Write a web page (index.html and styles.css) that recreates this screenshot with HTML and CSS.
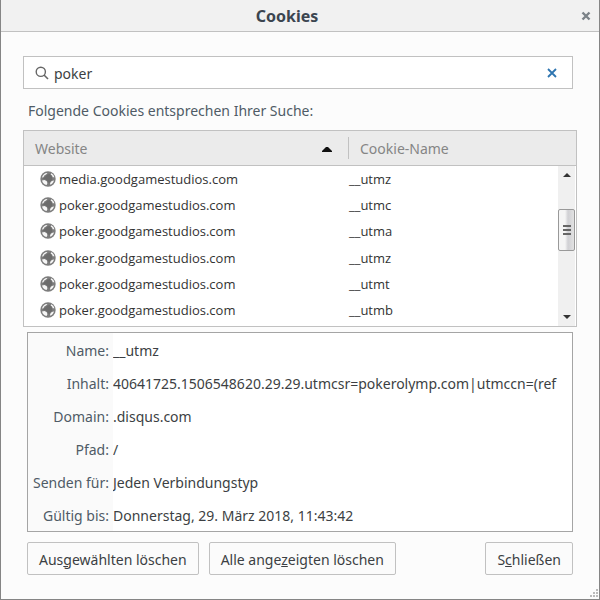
FILE: index.html
```html
<!DOCTYPE html>
<html lang="de">
<head>
<meta charset="utf-8">
<title>Cookies</title>
<link rel="stylesheet" href="styles.css">
</head>
<body>
<svg class="defs" aria-hidden="true">
  <symbol id="globe" viewBox="0 0 16 16">
    <circle cx="8" cy="8" r="7.700" fill="#7d7d7d"/>
    <path d="M2 6.500C2.500 4.500 4 2.700 6 2L7.500 2.300 6 3.600 4.300 4.600 3.400 6.200zM11.300 2.300C12.800 3 14 4.400 14.400 6.200L12.800 6.300 12 4.600 10.600 3.600zM2 9.400L4.600 9 6.800 10.200 7.400 12.200 6.600 14C4.300 13.600 2.500 11.800 2 9.400zM10 12.800L10.800 10.800 12.600 9.800 14 9.600C13.500 11.400 12.400 12.900 10.400 13.700z" fill="#f6f6f6"/>
    <path d="M2.600 7.800L5.400 5.400 7.400 3.400 9.800 3 11.600 5 12.400 8.600 10.400 10.600 9.200 12.600 7.400 10 5.600 8.600z" fill="#6c6c6c"/>
  </symbol>
</svg>
<div class="dialog" role="dialog" aria-labelledby="title">
  <header class="titlebar">
    <h1 id="title">Cookies</h1>
    <button class="close" type="button" aria-label="Fenster schließen">
      <svg viewBox="0 0 10 10" width="10" height="10"><path d="M1.500 1.500l7 7M8.500 1.500l-7 7" stroke="#7b8288" stroke-width="2.400"/></svg>
    </button>
  </header>
  <main class="content">
    <div class="search">
      <svg viewBox="0 0 14 14" width="14" height="14" aria-hidden="true"><circle cx="5.800" cy="5.800" r="4.600" fill="none" stroke="#666" stroke-width="1.400"/><path d="M9 9l4 4" stroke="#666" stroke-width="1.600"/></svg>
      <input type="text" value="poker" aria-label="Suchen">
      <button class="clear" type="button" aria-label="Suche löschen">
        <svg viewBox="0 0 10 10" width="10" height="10"><path d="M1 1l8 8M9 1l-8 8" stroke="#2e75b0" stroke-width="1.800"/></svg>
      </button>
    </div>
    <p class="intro">Folgende Cookies entsprechen Ihrer Suche:</p>
    <div class="list">
      <table>
        <thead>
          <tr>
            <th scope="col" aria-sort="ascending"><span class="head">Website<svg viewBox="0 0 10 6" width="10" height="6" aria-hidden="true"><path d="M0 6V5l4-4h2l4 4v1z" fill="#111"/></svg></span></th>
            <th scope="col">Cookie-Name</th>
          </tr>
        </thead>
        <tbody>
          <tr><td><span class="site"><svg class="globe"><use href="#globe"/></svg>media.goodgamestudios.com</span></td><td>__utmz</td></tr>
          <tr><td><span class="site"><svg class="globe"><use href="#globe"/></svg>poker.goodgamestudios.com</span></td><td>__utmc</td></tr>
          <tr><td><span class="site"><svg class="globe"><use href="#globe"/></svg>poker.goodgamestudios.com</span></td><td>__utma</td></tr>
          <tr><td><span class="site"><svg class="globe"><use href="#globe"/></svg>poker.goodgamestudios.com</span></td><td>__utmz</td></tr>
          <tr><td><span class="site"><svg class="globe"><use href="#globe"/></svg>poker.goodgamestudios.com</span></td><td>__utmt</td></tr>
          <tr><td><span class="site"><svg class="globe"><use href="#globe"/></svg>poker.goodgamestudios.com</span></td><td>__utmb</td></tr>
        </tbody>
      </table>
      <div class="scrollbar" aria-hidden="true">
        <svg viewBox="0 0 8 4" width="8" height="4"><path d="M0 4l4-4 4 4z" fill="#333"/></svg>
        <div class="track"><div class="thumb"><i></i><i></i><i></i></div></div>
        <svg viewBox="0 0 8 4" width="8" height="4"><path d="M0 0l4 4 4-4z" fill="#333"/></svg>
      </div>
    </div>
    <dl class="details">
      <dt>Name:</dt><dd>__utmz</dd>
      <dt>Inhalt:</dt><dd>40641725.1506548620.29.29.utmcsr=pokerolymp.com|utmccn=(ref</dd>
      <dt>Domain:</dt><dd>.disqus.com</dd>
      <dt>Pfad:</dt><dd>/</dd>
      <dt>Senden für:</dt><dd>Jeden Verbindungstyp</dd>
      <dt>Gültig bis:</dt><dd>Donnerstag, 29. März 2018, 11:43:42</dd>
    </dl>
    <div class="actions">
      <button type="button">Aus<u>g</u>ewählten löschen</button>
      <button type="button">Alle ange<u>z</u>eigten löschen</button>
      <button class="done" type="button">S<u>c</u>hließen</button>
    </div>
  </main>
  <svg class="grip" viewBox="0 0 9 9" width="9" height="9" aria-hidden="true"><path d="M7 0h2v2h-2zM7 3h2v2h-2zM7 6h2v2h-2zM4 3h2v2h-2zM4 6h2v2h-2zM1 6h2v2h-2z" fill="#bbb"/></svg>
</div>
</body>
</html>
```
FILE: styles.css
```css
* {
  box-sizing: border-box;
}

body {
  margin: 0;
  font: 14px/20px "Noto Sans", "Open Sans", sans-serif;
  color: #3c3f43;
}

button,
input {
  font: inherit;
  color: inherit;
}

.defs {
  position: absolute;
  width: 0;
  height: 0;
}

.dialog {
  position: relative;
  min-height: 100vh;
  border: solid #858585;
  border-width: 0 1px 2px;
  background: #fcfcfc;
}

.titlebar {
  display: flex;
  align-items: center;
  height: 32px;
  padding-right: 8px;
  border-bottom: 1px solid #c1c1c1;
  background: #f1f1f1;
}

h1 {
  flex: 1;
  margin: 0;
  padding-right: 8px;
  text-align: center;
  font-size: 16px;
  line-height: 24px;
  color: #3b4550;
}

.close,
.clear {
  display: flex;
  padding: 0;
  border: 0;
  background: none;
}

.content {
  padding: 24px 22px;
}

.search {
  display: flex;
  align-items: center;
  gap: 5px;
  height: 33px;
  margin-right: 4px;
  padding: 0 15px 0 11px;
  border: 1px solid #c1c1c1;
  background: #fff;
}

.search input {
  flex: 1;
  min-width: 0;
  padding: 2px 0 0;
  border: 0;
  outline: 0;
  background: none;
}

.intro {
  margin: 12px 5px 9px;
  color: #4f5b66;
}

.list {
  display: grid;
  grid-template-columns: 1fr 18px;
  border: 1px solid #c1c1c1;
  background: #fff;
}

table {
  grid-area: 1 / 1 / 2 / 3;
  width: 100%;
  height: 195px;
  border-collapse: collapse;
  table-layout: fixed;
}

thead tr {
  height: 34px;
  border-bottom: 1px solid #c1c1c1;
  background: #ebebeb;
}

th,
td {
  padding: 0;
  text-align: left;
}

th {
  padding: 3px 12px 0 11px;
  font-weight: 400;
  color: #858585;
}

th:first-child {
  width: 325px;
  padding-right: 17px;
  background: linear-gradient(#c1c1c1, #c1c1c1) right center / 1px 22px no-repeat;
}

.head {
  display: flex;
  align-items: center;
  justify-content: space-between;
}

td {
  font: 13px/18px "Open Sans", "Noto Sans", sans-serif;
  color: #333;
}

tbody tr:last-child td {
  padding-bottom: 2px;
}

.site {
  display: flex;
  align-items: center;
  gap: 3px;
  padding-left: 16px;
}

.globe {
  width: 16px;
  height: 16px;
}

.scrollbar {
  grid-area: 1 / 2 / 2 / 3;
  display: flex;
  flex-direction: column;
  align-items: center;
  margin: 35px 1px 0 0;
  padding: 7px 0;
  background: #f0f0f0;
}

.track {
  flex: 1;
  width: 100%;
  padding-top: 32px;
}

.thumb {
  display: flex;
  flex-direction: column;
  align-items: center;
  justify-content: center;
  gap: 2px;
  height: 42px;
  border: 1px solid #999;
  border-radius: 2px;
  background: linear-gradient(90deg, #f5f5f5 40%, #d0d0d4 60%, #e2e2e2);
}

.thumb i {
  width: 8px;
  height: 2px;
  background: #666;
}

.details {
  display: grid;
  grid-template-columns: 85px 1fr;
  grid-auto-rows: 33px;
  align-items: center;
  margin: 5px 4px 0;
  overflow: hidden;
  border: 1px solid #a5a5a5;
  background: linear-gradient(90deg, #fafafa 85px, #fff 85px);
}

.details dt,
.details dd {
  padding-top: 2px;
  white-space: nowrap;
}

.details dt {
  padding-right: 4px;
  text-align: right;
  color: #4f5b66;
}

.details dd {
  min-width: 0;
  margin: 0;
  overflow: hidden;
}

.actions {
  display: flex;
  gap: 10px;
  margin: 10px 4px 0;
}

.actions button {
  height: 33px;
  padding: 2px 11px 0;
  border: 1px solid #c1c1c1;
  border-radius: 2px;
  background: #fbfbfb;
  white-space: nowrap;
}

.actions .done {
  margin-left: auto;
}

.grip {
  position: absolute;
  right: 1px;
  bottom: 1px;
}
```
